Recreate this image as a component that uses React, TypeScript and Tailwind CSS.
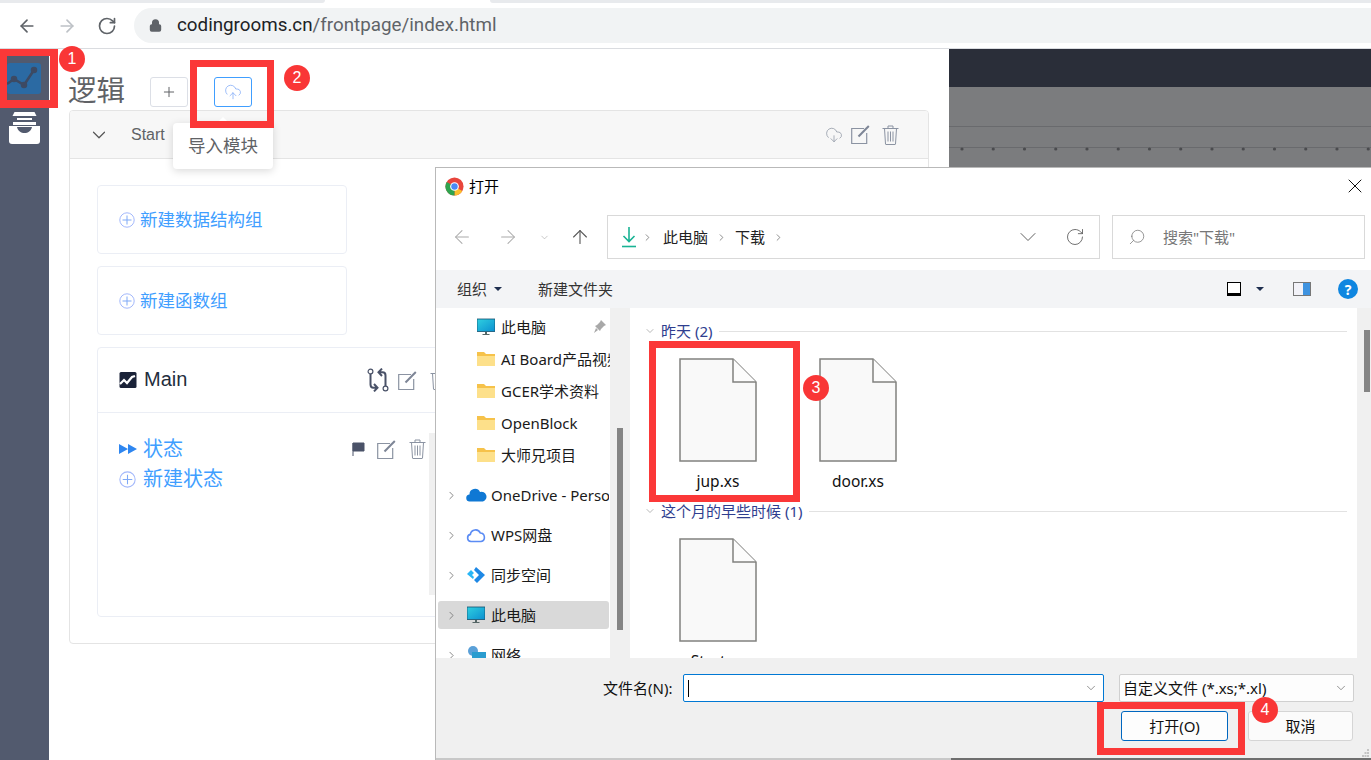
import type { ReactNode } from 'react';
import { ArrowLeft, ArrowRight, ArrowUp, ChevronDown, ChevronRight, CloudDownload, CloudUpload, Lock, Plus, RotateCw, Search, X } from 'lucide-react';

const UI_FONT = "font-['Noto_Sans','Noto_Sans_CJK_SC',sans-serif]";

function Badge({ n, className }: { n: number; className: string }) {
  return (
    <div className={`absolute w-[26px] h-[26px] rounded-full bg-[#f93636] text-white text-[16px] flex items-center justify-center font-['Liberation_Sans',sans-serif] ${className}`}>
      {n}
    </div>
  );
}

function RedBox({ className }: { className: string }) {
  return <div className={`absolute border-[#fb3838] ${className}`} />;
}

function PlusCircle({ size = 16 }: { size?: number }) {
  return (
    <svg width={size} height={size} viewBox="0 0 16 16" fill="none" stroke="#a3b8fb" strokeWidth="1">
      <circle cx="8" cy="8" r="7.2" />
      <path d="M8 3.500v9M3.500 8h9" stroke="#7fa9f7" />
    </svg>
  );
}

function ChartIcon() {
  return (
    <svg width="18" height="18" viewBox="0 0 18 18">
      <rect x="0.5" y="1" width="17" height="16" rx="1.500" fill="#1a2238" />
      <path d="M1 13l4-4 3 3 5-6 3-1" fill="none" stroke="#fff" strokeWidth="2.200" />
    </svg>
  );
}

function EditIcon({ className = '' }: { className?: string }) {
  return (
    <svg width="19" height="19" viewBox="0 0 19 19" fill="none" className={className}>
      <path d="M13 3.500H0.700v15h15V8" stroke="#8b93a2" strokeWidth="1.200" />
      <path d="M7.500 11.500L17.800 1" stroke="#7d8596" strokeWidth="2" />
    </svg>
  );
}

function TrashIcon({ className = '' }: { className?: string }) {
  return (
    <svg width="17" height="20" viewBox="0 0 17 20" fill="none" stroke="#8b93a2" strokeWidth="1" className={className}>
      <path d="M0.500 3.500h16M6 3.500V1h5v2.500" />
      <path d="M2.500 3.500l1 15.500c0 .3.200.5.500.5h9c.3 0 .5-.2.500-.5l1-15.500" />
      <path d="M6 6.500v10M8.500 6.500v10M11 6.500v10" />
    </svg>
  );
}

function GitIcon({ className = '' }: { className?: string }) {
  return (
    <svg width="22" height="24" viewBox="0 0 22 24" fill="none" stroke="#4a5268" className={className}>
      <circle cx="3.500" cy="3.500" r="2.400" strokeWidth="1.200" />
      <circle cx="18.500" cy="20.500" r="2.400" strokeWidth="1.200" />
      <path d="M3.500 6v10.500c0 2 1 3.200 3 3.200h3M7 16l3.500 3.700L7 23.400" strokeWidth="2" />
      <path d="M18.500 18V7.500c0-2-1-3.200-3-3.200h-3M15 .6l-3.500 3.700L15 8" strokeWidth="2" />
    </svg>
  );
}

function FileIcon() {
  return (
    <svg width="78" height="104" viewBox="0 0 78 104">
      <path d="M1 1h53l23 23v79H1z" fill="#f9f9f9" stroke="#81817f" strokeWidth="1.500" />
      <path d="M54 1v23h23" fill="#fcfcfc" stroke="#81817f" strokeWidth="1.500" />
    </svg>
  );
}

function FolderIcon() {
  return (
    <svg width="18" height="16" viewBox="0 0 18 16">
      <path d="M0 1h7l2 2h9v12H0z" fill="#f6c24a" />
      <path d="M0 5h18v10H0z" fill="#fde08a" />
    </svg>
  );
}

function MonitorIcon() {
  return (
    <svg width="18" height="18" viewBox="0 0 18 18">
      <defs>
        <linearGradient id="mon" x1="0" y1="0" x2="1" y2="1">
          <stop offset="0" stopColor="#2fd0e0" />
          <stop offset="1" stopColor="#0b8fd0" />
        </linearGradient>
      </defs>
      <rect x="0" y="1" width="18" height="12.500" fill="url(#mon)" stroke="#14506e" strokeWidth="0.800" />
      <path d="M8 14h2v2H8zM5.500 16h7v1h-7z" fill="#566" />
    </svg>
  );
}

function FileCell({ name }: { name: string }) {
  return (
    <div className="w-[140px] flex flex-col items-center">
      <FileIcon />
      <div className="mt-[9px] text-[15.5px] leading-[20px] text-[#111]">{name}</div>
    </div>
  );
}

function GroupHeader({ label }: { label: string }) {
  return (
    <div className="flex items-center h-[20px] pl-[13px] pr-[10px] text-[15px] text-[#2f3e8f]">
      <ChevronDown size={12} strokeWidth={1.200} color="#888" />
      <span className="ml-[5px] whitespace-nowrap">{label}</span>
      <div className="flex-1 h-px bg-[#e2e2e2] ml-[7px]" />
    </div>
  );
}

function TreeChild({ label, pin, monitor }: { label: string; pin?: boolean; monitor?: boolean }) {
  return (
    <div className="h-[32px] flex items-center pl-[41px] text-[15px] text-[#1a1a1a] whitespace-nowrap overflow-hidden relative">
      <div className="w-[18px] flex justify-center shrink-0">{monitor ? <MonitorIcon /> : <FolderIcon />}</div>
      <span className="ml-[6px]">{label}</span>
      {pin && (
        <svg width="13" height="13" viewBox="0 0 13 13" fill="#a8a8a8" className="absolute right-[4px] top-[9px]">
          <path d="M8 0l5 5-2 1-3 3-1 2-5-5 2-1 3-3zM3 8l2 2-4 3z" />
        </svg>
      )}
    </div>
  );
}

function TreeRoot({ label, icon, selected }: { label: string; icon: ReactNode; selected?: boolean }) {
  return (
    <div className="h-[40px] flex items-center ml-[2px] mr-[1px]">
      <div className={`h-[28px] flex-1 min-w-0 flex items-center pl-[7px] text-[15px] text-[#1a1a1a] whitespace-nowrap overflow-hidden rounded-[3px] ${selected ? 'bg-[#d9d9d9]' : ''}`}>
        <ChevronRight size={13} strokeWidth={1.600} color="#777" className="shrink-0" />
        <div className="w-[22px] ml-[7px] flex justify-center shrink-0">{icon}</div>
        <span className="ml-[4px]">{label}</span>
      </div>
    </div>
  );
}

function Dialog() {
  return (
    <div className={`absolute left-[435px] top-[167px] w-[936px] h-[593px] bg-white border-l border-t border-[#b9b9b9] flex flex-col ${UI_FONT}`}>
      {/* title bar */}
      <div className="h-[36px] flex items-center pl-[9px] pr-[3px] shrink-0">
        <svg width="19" height="19" viewBox="0 0 20 20">
          <circle cx="10" cy="10" r="9.500" fill="#e8453c" />
          <path d="M10 10L18.200 14.800A9.500 9.500 0 0 1 10 19.500z" fill="#fbc02d" />
          <path d="M10 10v9.500A9.500 9.500 0 0 1 1.800 5.200z" fill="#2ea44f" />
          <circle cx="10" cy="10" r="4.600" fill="#fff" />
          <circle cx="10" cy="10" r="3.400" fill="#4a8af4" />
        </svg>
        <span className="ml-[5px] text-[15px] text-black">打开</span>
        <X size={24} strokeWidth={1} color="#111" className="ml-auto -translate-x-[1px]" />
      </div>

      {/* nav row */}
      <div className="h-[44px] mt-[11px] flex items-center shrink-0">
        <ArrowLeft size={22} strokeWidth={1.100} color="#aaa" className="ml-[15px]" />
        <ArrowRight size={22} strokeWidth={1.100} color="#aaa" className="ml-[24px]" />
        <ChevronDown size={11} strokeWidth={1.400} color="#aaa" className="ml-[20px]" />
        <ArrowUp size={22} strokeWidth={1.200} color="#555" className="ml-[19px]" />
        <div className="ml-[16px] w-[493px] h-[44px] border border-[#d9d9d9] flex items-center pl-[13px] pr-[14px] text-[15px] text-[#222]">
          <svg width="16" height="21" viewBox="0 0 16 21" fill="none" stroke="#19b394" strokeWidth="1.600">
            <path d="M8 0v14M2.500 9L8 14.500 13.500 9" />
            <path d="M1 19.500h14" />
          </svg>
          <ChevronRight size={11} strokeWidth={1.600} color="#666" className="ml-[5px]" />
          <span className="ml-[10px]">此电脑</span>
          <ChevronRight size={11} strokeWidth={1.600} color="#666" className="ml-[8px]" />
          <span className="ml-[8px]">下载</span>
          <ChevronRight size={11} strokeWidth={1.600} color="#666" className="ml-[8px]" />
          <ChevronDown size={28} strokeWidth={0.800} color="#555" className="ml-auto" />
          <RotateCw size={20} strokeWidth={1} color="#555" className="ml-[23px]" />
        </div>
        <div className="ml-[12px] w-[253px] h-[44px] border border-[#d9d9d9] flex items-center pl-[15px] text-[15px] text-[#777]">
          <Search size={18} strokeWidth={1} color="#777" className="-scale-x-100" />
          <span className="ml-[17px]">搜索"下载"</span>
        </div>
      </div>

      {/* command bar */}
      <div className="h-[38px] mt-[11px] bg-[#f3f4f6] flex items-center text-[15px] text-[#333] shrink-0">
        <span className="ml-[21px]">组织</span>
        <div className="ml-[7px] w-0 h-0 border-x-[4px] border-x-transparent border-t-[4px] border-t-[#1f2f4f]" />
        <span className="ml-[36px]">新建文件夹</span>
        <div className="ml-auto w-[14px] h-[14px] border-[1.500px] border-black border-b-[3px] bg-white" />
        <div className="ml-[15px] w-0 h-0 border-x-[4px] border-x-transparent border-t-[4px] border-t-[#1f2f4f]" />
        <div className="ml-[29px] w-[18px] h-[14px] border border-[#777] flex justify-end bg-[#f2f2f8]">
          <div className="w-[7px] bg-[#3f93e0]" />
        </div>
        <div className="ml-[27px] mr-[13px] w-[20px] h-[20px] rounded-full bg-[#0f86e0] text-white text-[14px] font-bold flex items-center justify-center">?</div>
      </div>

      {/* navigation tree + files */}
      <div className="h-[350px] flex shrink-0 overflow-hidden">
        <div className="w-[174px] pt-[3px] overflow-hidden shrink-0">
          <TreeChild label="此电脑" pin monitor />
          <TreeChild label="AI Board产品视频" />
          <TreeChild label="GCER学术资料" />
          <TreeChild label="OpenBlock" />
          <TreeChild label="大师兄项目" />
          <div className="h-[4px]" />
          <TreeRoot
            label="OneDrive - Personal"
            icon={
              <svg width="21" height="14" viewBox="0 0 21 14">
                <path d="M4 13.500a3.500 3.500 0 0 1-.5-7A5.500 5.500 0 0 1 14 4a4.500 4.500 0 0 1 3 9.500z" fill="#0f78d4" />
              </svg>
            }
          />
          <TreeRoot
            label="WPS网盘"
            icon={
              <svg width="20" height="16" viewBox="0 0 20 16" fill="none" stroke="#5b8cf4" strokeWidth="1.600">
                <path d="M5 14.500a3.600 3.600 0 0 1-.6-7.100A5.200 5.200 0 0 1 14.300 6a4.300 4.300 0 0 1 .7 8.500z" />
              </svg>
            }
          />
          <TreeRoot
            label="同步空间"
            icon={
              <svg width="18" height="16" viewBox="0 0 18 16">
                <path d="M0 7l4-4 3 3-2 2 2 2-1 2z" fill="#29b6f6" />
                <path d="M9 0l9 8-8 8-3-3 5-5-5-5z" fill="#1e88e5" />
              </svg>
            }
          />
          <TreeRoot label="此电脑" icon={<MonitorIcon />} selected />
          <TreeRoot
            label="网络"
            icon={
              <svg width="20" height="18" viewBox="0 0 20 18">
                <circle cx="7" cy="5" r="5" fill="#5aa0d8" />
                <rect x="6" y="6" width="14" height="11" fill="#2a9ccf" />
              </svg>
            }
          />
        </div>
        <div className="w-[20px] bg-[#f0f0f0] shrink-0 pl-[7px] pt-[120px]">
          <div className="w-[6px] h-[202px] bg-[#858585]" />
        </div>
        <div className="flex-1 min-w-0 pt-[13px] pl-[1px]">
          <GroupHeader label="昨天 (2)" />
          <div className="flex pl-[17px] pt-[17px] h-[160px]">
            <FileCell name="jup.xs" />
            <FileCell name="door.xs" />
          </div>
          <GroupHeader label="这个月的早些时候 (1)" />
          <div className="flex pl-[17px] pt-[17px]">
            <FileCell name="Start.xs" />
          </div>
        </div>
        <div className="w-[14px] bg-[#f0f0f0] shrink-0 pt-[22px] pl-[7px]">
          <div className="w-[6px] h-[62px] bg-[#858585]" />
        </div>
      </div>

      {/* footer */}
      <div className="flex-1 bg-[#f0f0f0] text-[15px] text-[#111] pt-[16px] relative">
        <div className="flex items-center h-[28px]">
          <span className="ml-[167px] w-[80px] whitespace-nowrap">文件名(N):</span>
          <div className="w-[421px] h-[28px] bg-white border border-[#0078d4] rounded-[2px] flex items-center pl-[4px] pr-[5px]">
            <div className="w-px h-[17px] bg-black" />
            <ChevronDown size={14} strokeWidth={1.200} color="#666" className="ml-auto" />
          </div>
          <div className="ml-[15px] w-[235px] h-[28px] bg-[#fdfdfd] border border-[#d0d0d0] rounded-[2px] flex items-center pl-[3px] pr-[5px] whitespace-nowrap">
            自定义文件 (*.xs;*.xl)
            <ChevronDown size={14} strokeWidth={1.200} color="#666" className="ml-auto" />
          </div>
        </div>
        <div className="flex mt-[9px] ml-[685px]">
          <div className="w-[107px] h-[30px] bg-[#fdfdfd] border border-[#0067c0] rounded-[3px] flex items-center justify-center">打开(O)</div>
          <div className="ml-[20px] w-[105px] h-[30px] bg-[#fbfbfb] border border-[#d5d5d5] rounded-[3px] flex items-center justify-center">取消</div>
        </div>
        <svg width="8" height="8" viewBox="0 0 8 8" fill="#c4c4c4" className="absolute right-[1px] bottom-[1px]">
          <path d="M5 0h2v2H5zM2.500 3h2v2h-2zM5 3h2v2H5zM0 6h2v2H0zM2.500 6h2v2h-2zM5 6h2v2H5z" />
        </svg>
      </div>
      <div className="h-[2px] flex shrink-0">
        <div className="w-[515px] bg-[#c8c8c8]" />
        <div className="flex-1 bg-[#6e6e6e]" />
      </div>
    </div>
  );
}

export default function App() {
  return (
    <div className="relative w-[1371px] h-[760px] overflow-hidden bg-white flex flex-col font-['Liberation_Sans','Noto_Sans_CJK_SC',sans-serif]">
      {/* browser chrome */}
      <div className="h-[3px] flex shrink-0">
        <div className="w-[325px] bg-[#e8eaed] rounded-br-[8px]" />
        <div className="w-[165px] bg-white" />
        <div className="flex-1 bg-[#e8eaed] rounded-bl-[8px]" />
      </div>
      <div className="h-[46px] shrink-0 flex items-center border-b border-[#dadce0]">
        <ArrowLeft size={20} strokeWidth={2} color="#5f6368" className="ml-[17px]" />
        <ArrowRight size={20} strokeWidth={2} color="#bdc1c6" className="ml-[20px]" />
        <RotateCw size={20} strokeWidth={2} color="#5f6368" className="ml-[20px]" />
        <div className="ml-[17px] flex-1 h-[35px] bg-[#f1f3f4] rounded-l-full flex items-center pl-[15px] text-[18.800px] font-['Roboto',sans-serif]">
          <Lock size={13} strokeWidth={3} color="#5f6368" fill="#5f6368" />
          <span className="ml-[15px] text-[#202124]">codingrooms.cn</span>
          <span className="text-[#5f6368]">/frontpage/index.html</span>
        </div>
      </div>

      <div className="flex-1 flex min-h-0">
        {/* sidebar */}
        <div className="w-[49px] bg-[#525a6e] flex flex-col items-center shrink-0 pt-[14px]">
          <div className="w-[34px] h-[31px] rounded-[3px] bg-[#2b6aa3] -ml-[1px]">
            <svg width="34" height="31" viewBox="0 0 34 31" fill="#3d4a63" stroke="#3d4a63" strokeWidth="2.500">
              <path d="M0 21l7-5 10 6L27 7" fill="none" />
              <circle cx="7" cy="16" r="2" />
              <circle cx="17" cy="22" r="2" />
              <circle cx="27" cy="7" r="2" />
            </svg>
          </div>
          <svg width="33" height="32" viewBox="0 0 33 32" className="mt-[18px]">
            <path d="M6.500 0h20l2 4h-24z" fill="#fff" />
            <path d="M9 6h15v2H9z" fill="#fff" />
            <path d="M5 10h23v3H5z" fill="#fff" />
            <path d="M1 14h31v15a3 3 0 0 1-3 3H4a3 3 0 0 1-3-3z" fill="#fff" />
            <path d="M9 15h15c-1 4-4 6-7.500 6S10 19 9 15z" fill="#525a6e" />
          </svg>
        </div>

        {/* main logic panel */}
        <div className="w-[900px] shrink-0 bg-white pl-[20px] pr-[20px]">
          <div className="h-[61px] flex items-start">
            <h1 className="mt-[26px] text-[28.500px] leading-[32px] text-[#606266] font-normal -ml-px">逻辑</h1>
            <div className="ml-[25px] mt-[28px] w-[38px] h-[30px] border border-[#dcdfe6] rounded-[3px] flex items-center justify-center">
              <Plus size={16} strokeWidth={1.500} color="#606266" />
            </div>
            <div className="ml-[26px] mt-[28px] w-[38px] h-[30px] border border-[#409eff] rounded-[3px] flex items-center justify-center">
              <CloudUpload size={18} strokeWidth={1} color="#7fa9f7" />
            </div>
          </div>
          <div className="h-[534px] border border-[#e4e4e4] rounded-[4px] overflow-hidden">
            <div className="h-[48px] bg-[#f7f7f7] border-b border-[#e4e4e4] flex items-center text-[16px] text-[#606266]">
              <ChevronDown size={22} strokeWidth={1.300} className="ml-[18px]" color="#555" />
              <span className="ml-[21px]">Start</span>
              <div className="ml-auto mr-[29px] flex items-center text-[#8e95a3]">
                <CloudDownload size={18} strokeWidth={1} />
                <EditIcon className="ml-[8px]" />
                <TrashIcon className="ml-[12px]" />
              </div>
            </div>
            <div className="pl-[27px] pt-[26px]">
              <div className="w-[250px] h-[69px] border border-[#ebeef5] rounded-[4px] flex items-center pl-[21px] text-[17.500px] text-[#409eff]">
                <PlusCircle />
                <span className="ml-[5px] pt-[1px]">新建数据结构组</span>
              </div>
              <div className="mt-[12px] w-[250px] h-[69px] border border-[#ebeef5] rounded-[4px] flex items-center pl-[21px] text-[17.500px] text-[#409eff]">
                <PlusCircle />
                <span className="ml-[5px] pt-[1px]">新建函数组</span>
              </div>
              <div className="mt-[12px] w-[800px] h-[270px] border border-[#ebeef5] rounded-[4px]">
                <div className="h-[65px] border-b border-[#ebeef5] flex items-center pl-[21px] text-[20px] text-[#1f2d3d]">
                  <ChartIcon />
                  <span className="ml-[7px] -mt-[3px]">Main</span>
                  <GitIcon className="ml-[180px] -mt-[1px]" />
                  <EditIcon className="ml-[9px]" />
                  <TrashIcon className="ml-[13px]" />
                </div>
                <div className="relative pl-[21px] pt-[21px]">
                  {/* scrollbar track of the list */}
                  <div className="absolute left-[331px] top-[20px] w-[7px] h-[162px] bg-[#f0f0f0]" />
                  <div className="h-[30px] flex items-center text-[20px] text-[#409eff]">
                    <svg width="18" height="10" viewBox="0 0 18 10" fill="#2e86f0">
                      <path d="M0 0l9 5-9 5zM9 0l9 5-9 5z" />
                    </svg>
                    <span className="ml-[6px]">状态</span>
                    <svg width="13" height="14" viewBox="0 0 13 14" className="ml-[169px]">
                      <path d="M1 1h11v8H1zM1 1v13" fill="#4a5268" stroke="#4a5268" />
                    </svg>
                    <EditIcon className="ml-[12px]" />
                    <TrashIcon className="ml-[13px]" />
                  </div>
                  <div className="h-[30px] flex items-center text-[20px] text-[#409eff]">
                    <PlusCircle size={17} />
                    <span className="ml-[7px]">新建状态</span>
                  </div>
                </div>
              </div>
            </div>
          </div>
        </div>

        {/* simulator area */}
        <div className="flex-1 flex flex-col min-w-0">
          <div className="h-[38px] bg-[#2a2e39] shrink-0" />
          <div className="flex-1 bg-[#7b7c7e]">
            <svg width="422" height="80" viewBox="0 0 422 80">
              <path d="M0 39.500h422M0 60.500h422" stroke="#696a6d" />
              {Array.from({ length: 14 }).map((_, i) => (
                <circle key={i} cx={13 + i * 31.25} cy={62} r="1.600" fill="#4a4b4e" />
              ))}
            </svg>
          </div>
        </div>
      </div>

      {/* tooltip */}
      <div className="absolute left-[173px] top-[123px] w-[100px] h-[46px] bg-white rounded-[4px] shadow-[0_2px_8px_rgba(0,0,0,0.15)] flex items-center justify-center text-[17.500px] text-[#606266]">
        导入模块
        <div className="absolute -top-[6px] left-[44px] w-0 h-0 border-x-[6px] border-x-transparent border-b-[6px] border-b-white" />
      </div>

      <Dialog />

      {/* tutorial annotations */}
      <RedBox className="left-0 top-[49px] w-[58px] h-[59px] border-[7px] border-r-[8px] border-b-[8px]" />
      <RedBox className="left-[190px] top-[60px] w-[84px] h-[68px] border-[7px]" />
      <RedBox className="left-[649px] top-[341px] w-[151px] h-[161px] border-[7px]" />
      <RedBox className="left-[1097px] top-[702px] w-[148px] h-[53px] border-[7px]" />
      <Badge n={1} className="left-[59px] top-[46px]" />
      <Badge n={2} className="left-[284px] top-[65px]" />
      <Badge n={3} className="left-[803px] top-[375px]" />
      <Badge n={4} className="left-[1252px] top-[697px]" />
    </div>
  );
}
